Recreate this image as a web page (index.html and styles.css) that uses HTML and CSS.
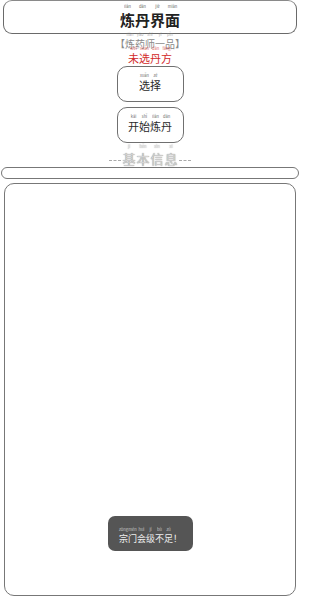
FILE: index.html
```html
<!DOCTYPE html>
<html lang="zh">
<head>
<meta charset="utf-8">
<title>炼丹界面</title>
<link rel="stylesheet" href="styles.css">
</head>
<body>
<div class="page">
  <div class="title-bar">
    <span class="w"><span class="py">liàn</span><span class="ch">炼</span></span><span class="w"><span class="py">dān</span><span class="ch">丹</span></span><span class="w"><span class="py">jiè</span><span class="ch">界</span></span><span class="w"><span class="py">miàn</span><span class="ch">面</span></span>
  </div>
  <div class="row rank">
    <span class="w"><span class="py"></span><span class="ch">【</span></span><span class="w"><span class="py">liàn</span><span class="ch">炼</span></span><span class="w"><span class="py">yào</span><span class="ch">药</span></span><span class="w"><span class="py">shī</span><span class="ch">师</span></span><span class="w"><span class="py">yī</span><span class="ch">一</span></span><span class="w"><span class="py">pǐn</span><span class="ch">品</span></span><span class="w"><span class="py"></span><span class="ch">】</span></span>
  </div>
  <div class="row recipe">
    <span class="w"><span class="py">wèi</span><span class="ch">未</span></span><span class="w"><span class="py">xuǎn</span><span class="ch">选</span></span><span class="w"><span class="py">dān</span><span class="ch">丹</span></span><span class="w"><span class="py">fāng</span><span class="ch">方</span></span>
  </div>
  <button class="btn btn-select">
    <span class="w"><span class="py">xuǎn</span><span class="ch">选</span></span><span class="w"><span class="py">zé</span><span class="ch">择</span></span>
  </button>
  <button class="btn btn-start">
    <span class="w"><span class="py">kāi</span><span class="ch">开</span></span><span class="w"><span class="py">shǐ</span><span class="ch">始</span></span><span class="w"><span class="py">liàn</span><span class="ch">炼</span></span><span class="w"><span class="py">dān</span><span class="ch">丹</span></span>
  </button>
  <div class="row section-title">
    <span class="dash"></span><span class="w"><span class="py">jī</span><span class="ch">基</span></span><span class="w"><span class="py">běn</span><span class="ch">本</span></span><span class="w"><span class="py">xìn</span><span class="ch">信</span></span><span class="w"><span class="py">xī</span><span class="ch">息</span></span><span class="dash"></span>
  </div>
  <div class="thin-bar"></div>
  <div class="main-box">
    <div class="toast">
      <span class="w"><span class="py">zōng</span><span class="ch">宗</span></span><span class="w"><span class="py">mén</span><span class="ch">门</span></span><span class="w"><span class="py">huì</span><span class="ch">会</span></span><span class="w"><span class="py">jí</span><span class="ch">级</span></span><span class="w"><span class="py">bù</span><span class="ch">不</span></span><span class="w"><span class="py">zú</span><span class="ch">足</span></span><span class="w"><span class="py"></span><span class="ch">！</span></span>
    </div>
  </div>
</div>
</body>
</html>
```
FILE: styles.css
```css
html, body {
  margin: 0;
  padding: 0;
  background: #fff;
}
body {
  font-family: "Noto Sans CJK SC", "Noto Sans", sans-serif;
  color: #222;
}
.page {
  width: 300px;
  height: 600px;
  display: flex;
  flex-direction: column;
  align-items: center;
}
/* a character with its pinyin above */
.w {
  display: inline-flex;
  flex-direction: column;
  align-items: center;
  gap: calc(0.2em + 1px);
}
.py {
  display: block;
  height: 4px;
  font-size: 4px;
  line-height: 4px;
  white-space: nowrap;
  font-weight: normal;
  opacity: 0.7;
}
.ch {
  display: block;
  line-height: 1em;
}
.title-bar {
  box-sizing: border-box;
  width: 294px;
  height: 34px;
  border: 1px solid #6a6a6a;
  border-top-color: #8a8a8a;
  border-radius: 9px;
  display: flex;
  align-items: center;
  justify-content: center;
  padding-bottom: 3px;
  font-size: 15px;
  font-weight: bold;
  color: #222;
}
.row {
  display: flex;
  align-items: flex-end;
  justify-content: center;
}
.rank {
  height: 15px;
  font-size: 10px;
  color: #8a8a8a;
}
.recipe {
  height: 15px;
  font-size: 11px;
  color: #d22a2a;
}
.btn {
  box-sizing: border-box;
  width: 67px;
  height: 36px;
  margin: 0;
  background: #fff;
  border: 1.5px solid #707070;
  border-radius: 10px;
  font-family: inherit;
  font-size: 11px;
  color: #2a2a2a;
  padding: 0 0 4px;
  display: flex;
  align-items: center;
  justify-content: center;
}
.btn-select {
  margin-top: 2px;
}
.btn-start {
  margin-top: 5px;
}
.section-title {
  height: 22px;
  font-size: 13px;
  color: #d4d4d4;
  text-shadow: 0 0 1px #6a6a6a;
  gap: 1px;
}
.dash {
  width: 12px;
  height: 4px;
  border-top: 1px dashed #aaa;
}
.thin-bar {
  box-sizing: border-box;
  margin-top: 2px;
  width: 298px;
  height: 12px;
  border: 1px solid #777;
  border-radius: 6px;
}
.main-box {
  position: relative;
  box-sizing: border-box;
  margin-top: 4px;
  width: 292px;
  height: 413px;
  border: 1.5px solid #777;
  border-radius: 10px;
}
.toast {
  position: absolute;
  left: 103px;
  top: 332px;
  box-sizing: border-box;
  width: 85px;
  height: 35px;
  background: #555;
  border-radius: 7px;
  color: #eee;
  font-size: 9px;
  padding-top: 3px;
  display: flex;
  align-items: center;
  justify-content: center;
}
```
